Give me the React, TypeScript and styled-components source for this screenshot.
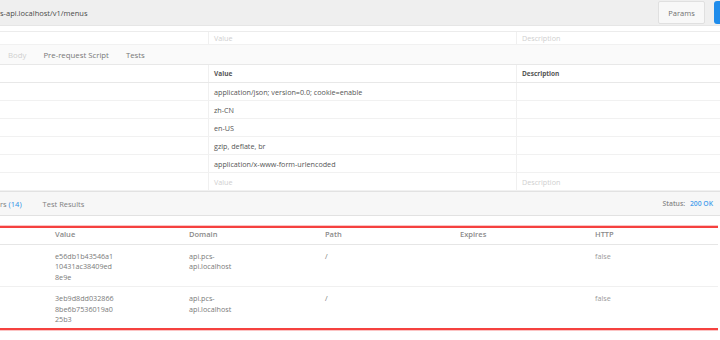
import styled, { createGlobalStyle } from "styled-components";

const GlobalStyle = createGlobalStyle`
    html, body {
        margin: 0;
        padding: 0;
        background: #ffffff;
    }

    body {
        font-family: "Open Sans", "DejaVu Sans", sans-serif;
        width: 720px;
        height: 340px;
        overflow: hidden;
    }
`

const Page = styled.div`
    width: 720px;
    height: 340px;
    overflow: hidden;
    font-size: 7.5px;
    color: #505050;
`

const UrlBar = styled.div`
    display: flex;
    align-items: center;
    height: 26px;
    background-color: #efefef;
    border-bottom: 1px solid #e6e6e6;
    box-sizing: border-box;
`

const UrlText = styled.div`
    flex: 1;
    font-size: 7.5px;
    color: #4a4a4a;
    white-space: nowrap;
    overflow: hidden;
`

const ParamsButton = styled.button`
    height: 23px;
    width: 47px;
    margin-right: 9px;
    border: 1px solid #e0e0e0;
    border-radius: 2px;
    background-color: #f8f8f8;
    font-family: inherit;
    font-size: 7.5px;
    color: #707070;
    padding: 0;
`

const SendButton = styled.button`
    height: 23px;
    width: 6px;
    border: none;
    border-radius: 3px 0 0 3px;
    background-color: #1f8ceb;
    padding: 0;
`

const Gap = styled.div`
    height: 5px;
    border-bottom: 1px solid #ececec;
`

const KvRow = styled.div<{ $height: number; $head?: boolean }>`
    display: grid;
    grid-template-columns: 208px 308px 1fr;
    height: ${(props) => props.$height}px;
    box-sizing: border-box;
    border-bottom: 1px solid ${(props) => (props.$head ? "#e8e8e8" : "#f1f1f1")};
`

const KvCell = styled.div<{ $muted?: boolean; $head?: boolean }>`
    display: flex;
    align-items: center;
    padding-left: 5px;
    border-left: 1px solid #f0f0f0;
    font-size: ${(props) => (props.$head ? "6.5px" : "7.2px")};
    font-weight: ${(props) => (props.$head ? 700 : 400)};
    color: ${(props) => (props.$head ? "#555555" : props.$muted ? "#cfcfcf" : "#555555")};
    white-space: nowrap;
    overflow: hidden;

    &:first-child {
        border-left: none;
    }
`

const TabBar = styled.div`
    display: flex;
    align-items: center;
    height: 20px;
    box-sizing: border-box;
    background-color: #fafafa;
    border-bottom: 1px solid #e8e8e8;
`

const Tab = styled.span<{ $faded?: boolean }>`
    padding: 0 8.5px;
    font-size: 7.8px;
    color: ${(props) => (props.$faded ? "#d0d0d0" : "#777777")};

    &:first-child {
        padding-left: 8px;
    }
`

const ResponseBar = styled.div`
    display: flex;
    align-items: center;
    height: 25px;
    box-sizing: border-box;
    background-color: #f7f7f7;
    border-top: 1px solid #e2e2e2;
    border-bottom: 1px solid #e2e2e2;
    padding-right: 7px;
`

const ResponseTab = styled.span`
    font-size: 7.5px;
    color: #808080;
    margin-right: 21px;
    white-space: nowrap;
`

const Count = styled.span`
    color: #2f8fe6;
`

const Status = styled.div`
    margin-left: auto;
    font-size: 6.8px;
    color: #8a8a8a;
    font-weight: 600;

    b {
        color: #4aa0ec;
        font-weight: 600;
        margin-left: 3px;
    }
`

const CookieBox = styled.div`
    margin-top: 10px;
    margin-right: 2px;
    border-top: 2px solid #f5413f;
    border-bottom: 2px solid #f5413f;
    box-shadow: 0 -1px 0 #fbc4c4, 0 1px 0 #fbc4c4;
`

const CookieRow = styled.div<{ $head?: boolean }>`
    display: grid;
    grid-template-columns: 50px 134px 136px 135px 135px 1fr;
    box-sizing: border-box;
    height: ${(props) => (props.$head ? "17px" : "auto")};
    align-items: start;
    padding: ${(props) => (props.$head ? "1px 0 0" : "6px 0 4px")};
    border-bottom: 1px solid ${(props) => (props.$head ? "#e6e6e6" : "#f0f0f0")};

    &:last-child {
        border-bottom: none;
    }
`

const CookieHead = styled.div`
    padding-left: 5px;
    font-size: 7.5px;
    line-height: 10px;
    font-weight: 600;
    color: #8a8a8a;
`

const CookieCell = styled.div<{ $light?: boolean }>`
    padding-left: 5px;
    max-width: 60px;
    font-size: 7.2px;
    line-height: 10.4px;
    color: ${(props) => (props.$light ? "#9a9a9a" : "#7a7a7a")};
    overflow-wrap: anywhere;
`

const headers = [
    "application/json; version=0.0; cookie=enable",
    "zh-CN",
    "en-US",
    "gzip, deflate, br",
    "application/x-www-form-urlencoded",
]

const cookies = [
    { value: "e56db1b43546a110431ac38409ed8e9e", domain: "api.pcs-api.localhost", path: "/", http: "false" },
    { value: "3eb9d8dd0328668be6b7536019a025b3", domain: "api.pcs-api.localhost", path: "/", http: "false" },
]

const App = () => {
    return (
        <>
            <GlobalStyle />
            <Page>
                <UrlBar>
                    <UrlText>s-api.localhost/v1/menus</UrlText>
                    <ParamsButton>Params</ParamsButton>
                    <SendButton aria-label="Send" />
                </UrlBar>
                <Gap />
                <KvRow $height={13}>
                    <KvCell />
                    <KvCell $muted>Value</KvCell>
                    <KvCell $muted>Description</KvCell>
                </KvRow>
                <TabBar>
                    <Tab $faded>Body</Tab>
                    <Tab>Pre-request Script</Tab>
                    <Tab>Tests</Tab>
                </TabBar>
                <KvRow $height={18} $head>
                    <KvCell />
                    <KvCell $head>Value</KvCell>
                    <KvCell $head>Description</KvCell>
                </KvRow>
                {headers.map((h) => (
                    <KvRow $height={18} key={h}>
                        <KvCell />
                        <KvCell>{h}</KvCell>
                        <KvCell />
                    </KvRow>
                ))}
                <KvRow $height={18}>
                    <KvCell />
                    <KvCell $muted>Value</KvCell>
                    <KvCell $muted>Description</KvCell>
                </KvRow>
                <ResponseBar>
                    <ResponseTab>rs <Count>(14)</Count></ResponseTab>
                    <ResponseTab>Test Results</ResponseTab>
                    <Status>Status: <b>200 OK</b></Status>
                </ResponseBar>
                <CookieBox>
                    <CookieRow $head>
                        <CookieHead />
                        <CookieHead>Value</CookieHead>
                        <CookieHead>Domain</CookieHead>
                        <CookieHead>Path</CookieHead>
                        <CookieHead>Expires</CookieHead>
                        <CookieHead>HTTP</CookieHead>
                    </CookieRow>
                    {cookies.map((c) => (
                        <CookieRow key={c.value}>
                            <CookieCell />
                            <CookieCell>{c.value}</CookieCell>
                            <CookieCell>{c.domain}</CookieCell>
                            <CookieCell>{c.path}</CookieCell>
                            <CookieCell />
                            <CookieCell $light>{c.http}</CookieCell>
                        </CookieRow>
                    ))}
                </CookieBox>
            </Page>
        </>
    )
}

export default App;
